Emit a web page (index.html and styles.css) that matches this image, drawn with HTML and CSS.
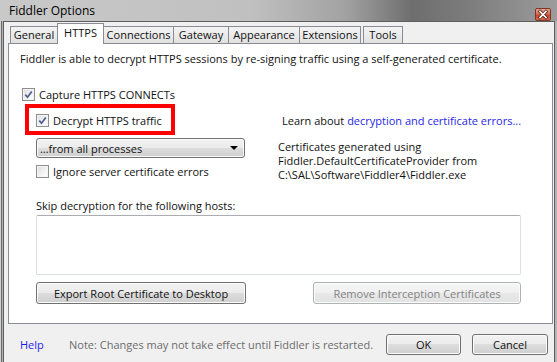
FILE: index.html
```html
<!DOCTYPE html>
<html lang="en">
<head>
    <meta charset="UTF-8">
    <title>Fiddler Options</title>
    <link rel="stylesheet" href="styles.css">
</head>
<body>
    <div class="window">
        <div class="titlebar">
            <span class="title">Fiddler Options</span>
            <span class="close-btn">
                <svg width="14" height="11" viewBox="0 0 14 11">
                    <path d="M4 2.5 L10 8.5 M10 2.5 L4 8.5" stroke="#5a2a22" stroke-width="3.2" stroke-linecap="square"/>
                    <path d="M4 2.5 L10 8.5 M10 2.5 L4 8.5" stroke="#ffffff" stroke-width="1.6" stroke-linecap="square"/>
                </svg>
            </span>
        </div>
        <div class="frame">
            <div class="client">
                <div class="tabs">
                    <div class="tab tab-general">General</div>
                    <div class="tab tab-https selected">HTTPS</div>
                    <div class="tab tab-connections">Connections</div>
                    <div class="tab tab-gateway">Gateway</div>
                    <div class="tab tab-appearance">Appearance</div>
                    <div class="tab tab-extensions">Extensions</div>
                    <div class="tab tab-tools">Tools</div>
                </div>

                <div class="panel">
                    <p class="intro">Fiddler is able to decrypt HTTPS sessions by re-signing traffic using a self-generated certificate.</p>

                    <label class="check-row capture-row">
                        <span class="checkbox">
                            <svg width="9" height="9" viewBox="0 0 9 9"><path d="M1.3 4.6 L3.5 7.2 L7.8 1.4" fill="none" stroke="#4b5f8e" stroke-width="1.7"/></svg>
                        </span>
                        Capture HTTPS CONNECTs
                    </label>

                    <div class="decrypt-block">
                        <div class="decrypt-left">
                            <div class="highlight">
                                <label class="check-row">
                                    <span class="checkbox">
                                        <svg width="9" height="9" viewBox="0 0 9 9"><path d="M1.3 4.6 L3.5 7.2 L7.8 1.4" fill="none" stroke="#4b5f8e" stroke-width="1.7"/></svg>
                                    </span>
                                    Decrypt HTTPS traffic
                                </label>
                            </div>
                            <div class="select">
                                <span>…from all processes</span>
                                <span class="select-arrow"></span>
                            </div>
                            <label class="check-row ignore-row">
                                <span class="checkbox"></span>
                                Ignore server certificate errors
                            </label>
                        </div>
                        <div class="decrypt-right">
                            <p class="learn">Learn about <a class="link">decryption and certificate errors...</a></p>
                            <p class="cert-info">Certificates generated using<br>Fiddler.DefaultCertificateProvider from<br>C:\SAL\Software\Fiddler4\Fiddler.exe</p>
                        </div>
                    </div>

                    <p class="skip-label">Skip decryption for the following hosts:</p>
                    <div class="hosts-box"></div>

                    <div class="panel-buttons">
                        <button class="btn btn-export">Export Root Certificate to Desktop</button>
                        <button class="btn btn-remove" disabled>Remove Interception Certificates</button>
                    </div>
                </div>

                <div class="footer">
                    <a class="link help">Help</a>
                    <span class="note">Note: Changes may not take effect until Fiddler is restarted.</span>
                    <button class="btn btn-ok">OK</button>
                    <button class="btn btn-cancel">Cancel</button>
                </div>
            </div>
        </div>
    </div>
</body>
</html>
```

FILE: styles.css
```css
* {
    margin: 0;
    padding: 0;
    box-sizing: border-box;
}

body {
    width: 557px;
    height: 362px;
    overflow: hidden;
    font-family: 'Open Sans', sans-serif;
    font-size: 11px;
    color: #111;
    background: #9e9e9e;
}

.window {
    height: 362px;
    display: flex;
    flex-direction: column;
}

/* title bar */
.titlebar {
    height: 21px;
    display: flex;
    align-items: flex-start;
    padding-left: 9px;
    padding-right: 6px;
    background: linear-gradient(to right, #c9c9c9 0%, #c0c0c0 45%, #a2a2a2 62%, #6e6e6e 74%, #7c7c7c 84%, #9c9c9c 100%);
}

.title {
    font-size: 12px;
    line-height: 21px;
    color: #000;
}

.close-btn {
    margin-left: auto;
    margin-top: 8px;
    width: 16px;
    height: 13px;
    border: 1px solid #7e3526;
    border-radius: 2px;
    background: linear-gradient(#eba58f 0%, #d9705a 45%, #c74428 55%, #d8674c 100%);
    display: flex;
    align-items: center;
    justify-content: center;
}

.frame {
    flex: 1;
    display: flex;
    padding-left: 3px;
    padding-right: 6px;
    background: linear-gradient(to right, #d2d2d2 0, #d2d2d2 1px, #6a6a6a 1px, #6a6a6a 2px, #b4b4b4 2px, #b4b4b4 100%);
}

.client {
    flex: 1;
    background: #f0f0f0;
    border: 1px solid #5f5f5f;
    border-bottom: none;
    padding: 1px 1px 0 4px;
}

/* tabs */
.tabs {
    height: 21px;
    margin-bottom: -1px;
    padding-left: 2px;
    display: flex;
    align-items: flex-end;
}

.tab {
    height: 17px;
    margin-bottom: 1px;
    margin-right: -1px;
    border: 1px solid #898c95;
    border-bottom: none;
    background: linear-gradient(#f3f3f3 0%, #ebebeb 50%, #e0e0e0 100%);
    text-align: center;
    line-height: 16px;
}

.tab.selected {
    position: relative;
    z-index: 1;
    height: 21px;
    margin-bottom: 0;
    background: #fff;
    line-height: 17px;
    padding-bottom: 2px;
}

.tab-general { width: 48px; }
.tab-https { width: 47px; }
.tab-connections { width: 71px; }
.tab-gateway { width: 56px; }
.tab-appearance { width: 72px; }
.tab-extensions { width: 62px; }
.tab-tools { width: 40px; margin-left: 3px; }

/* tab page */
.panel {
    height: 281px;
    background: #fff;
    border: 1px solid #898c95;
    padding: 0 31px 0 27px;
    white-space: nowrap;
}

.intro {
    margin: 8px 0 0 -16px;
    line-height: 14px;
}

.check-row {
    display: flex;
    align-items: center;
    height: 13px;
    line-height: 13px;
}

.checkbox {
    width: 13px;
    height: 13px;
    margin-right: 4px;
    border: 1px solid #8e8f8f;
    background: linear-gradient(135deg, #dcdcdc 0%, #f4f4f4 60%, #ffffff 100%);
    box-shadow: inset 0 0 0 1px #f4f4f4;
    display: flex;
    align-items: center;
    justify-content: center;
    flex-shrink: 0;
}

.capture-row {
    margin: 22px 0 0 -14px;
}

.decrypt-block {
    margin-top: 3px;
    display: flex;
}

.decrypt-left {
    width: 209px;
    flex-shrink: 0;
}

.highlight {
    width: 150px;
    height: 31px;
    margin-left: -11px;
    border: 4px solid #ff0000;
    padding: 6px 0 0 7px;
}

.select {
    margin-top: 3px;
    height: 20px;
    border: 1px solid #707070;
    border-radius: 3px;
    background: linear-gradient(#f2f2f2 0%, #ebebeb 50%, #dddddd 50%, #cfcfcf 100%);
    box-shadow: inset 0 0 0 1px #fbfbfb;
    display: flex;
    align-items: center;
    padding: 0 4px 0 3px;
}

.select-arrow {
    margin-left: auto;
    margin-right: 2px;
    width: 0;
    height: 0;
    border-left: 4px solid transparent;
    border-right: 4px solid transparent;
    border-top: 4px solid #000;
}

.ignore-row {
    margin-top: 7px;
}

.decrypt-right {
    margin-left: 33px;
}

.learn {
    margin-top: 10px;
    padding-left: 4px;
    line-height: 14px;
}

.link {
    color: #1f1fe6;
    cursor: pointer;
}

.cert-info {
    margin-top: 12px;
    line-height: 14px;
}

.skip-label {
    margin-top: 17px;
    line-height: 14px;
}

.hosts-box {
    margin-top: 2px;
    height: 60px;
    border: 1px solid #dbdfe6;
    border-top-color: #abadb3;
    border-radius: 2px;
}

.panel-buttons {
    margin-top: 7px;
    display: flex;
    justify-content: space-between;
}

/* buttons */
.btn {
    height: 22px;
    font-family: 'Open Sans', sans-serif;
    font-size: 11px;
    color: #111;
    border: 1px solid #707070;
    border-radius: 3px;
    background: linear-gradient(#f2f2f2 0%, #ebebeb 50%, #dddddd 50%, #cfcfcf 100%);
    box-shadow: inset 0 0 0 1px #fcfcfc;
}

.btn-export { width: 210px; }

.btn-remove {
    width: 208px;
    color: #838383;
    border-color: #adb2b5;
    background: linear-gradient(#f6f6f6 0%, #f0f0f0 50%, #e8e8e8 50%, #e2e2e2 100%);
}

.footer {
    margin: 10px 5px 0 12px;
    height: 21px;
    display: flex;
    align-items: center;
}

.help {
    width: 49px;
}

.note {
    color: #6d6d6d;
    margin-right: auto;
}

.btn-ok {
    width: 75px;
    height: 21px;
}

.btn-cancel {
    width: 76px;
    height: 21px;
    margin-left: 11px;
}
```
